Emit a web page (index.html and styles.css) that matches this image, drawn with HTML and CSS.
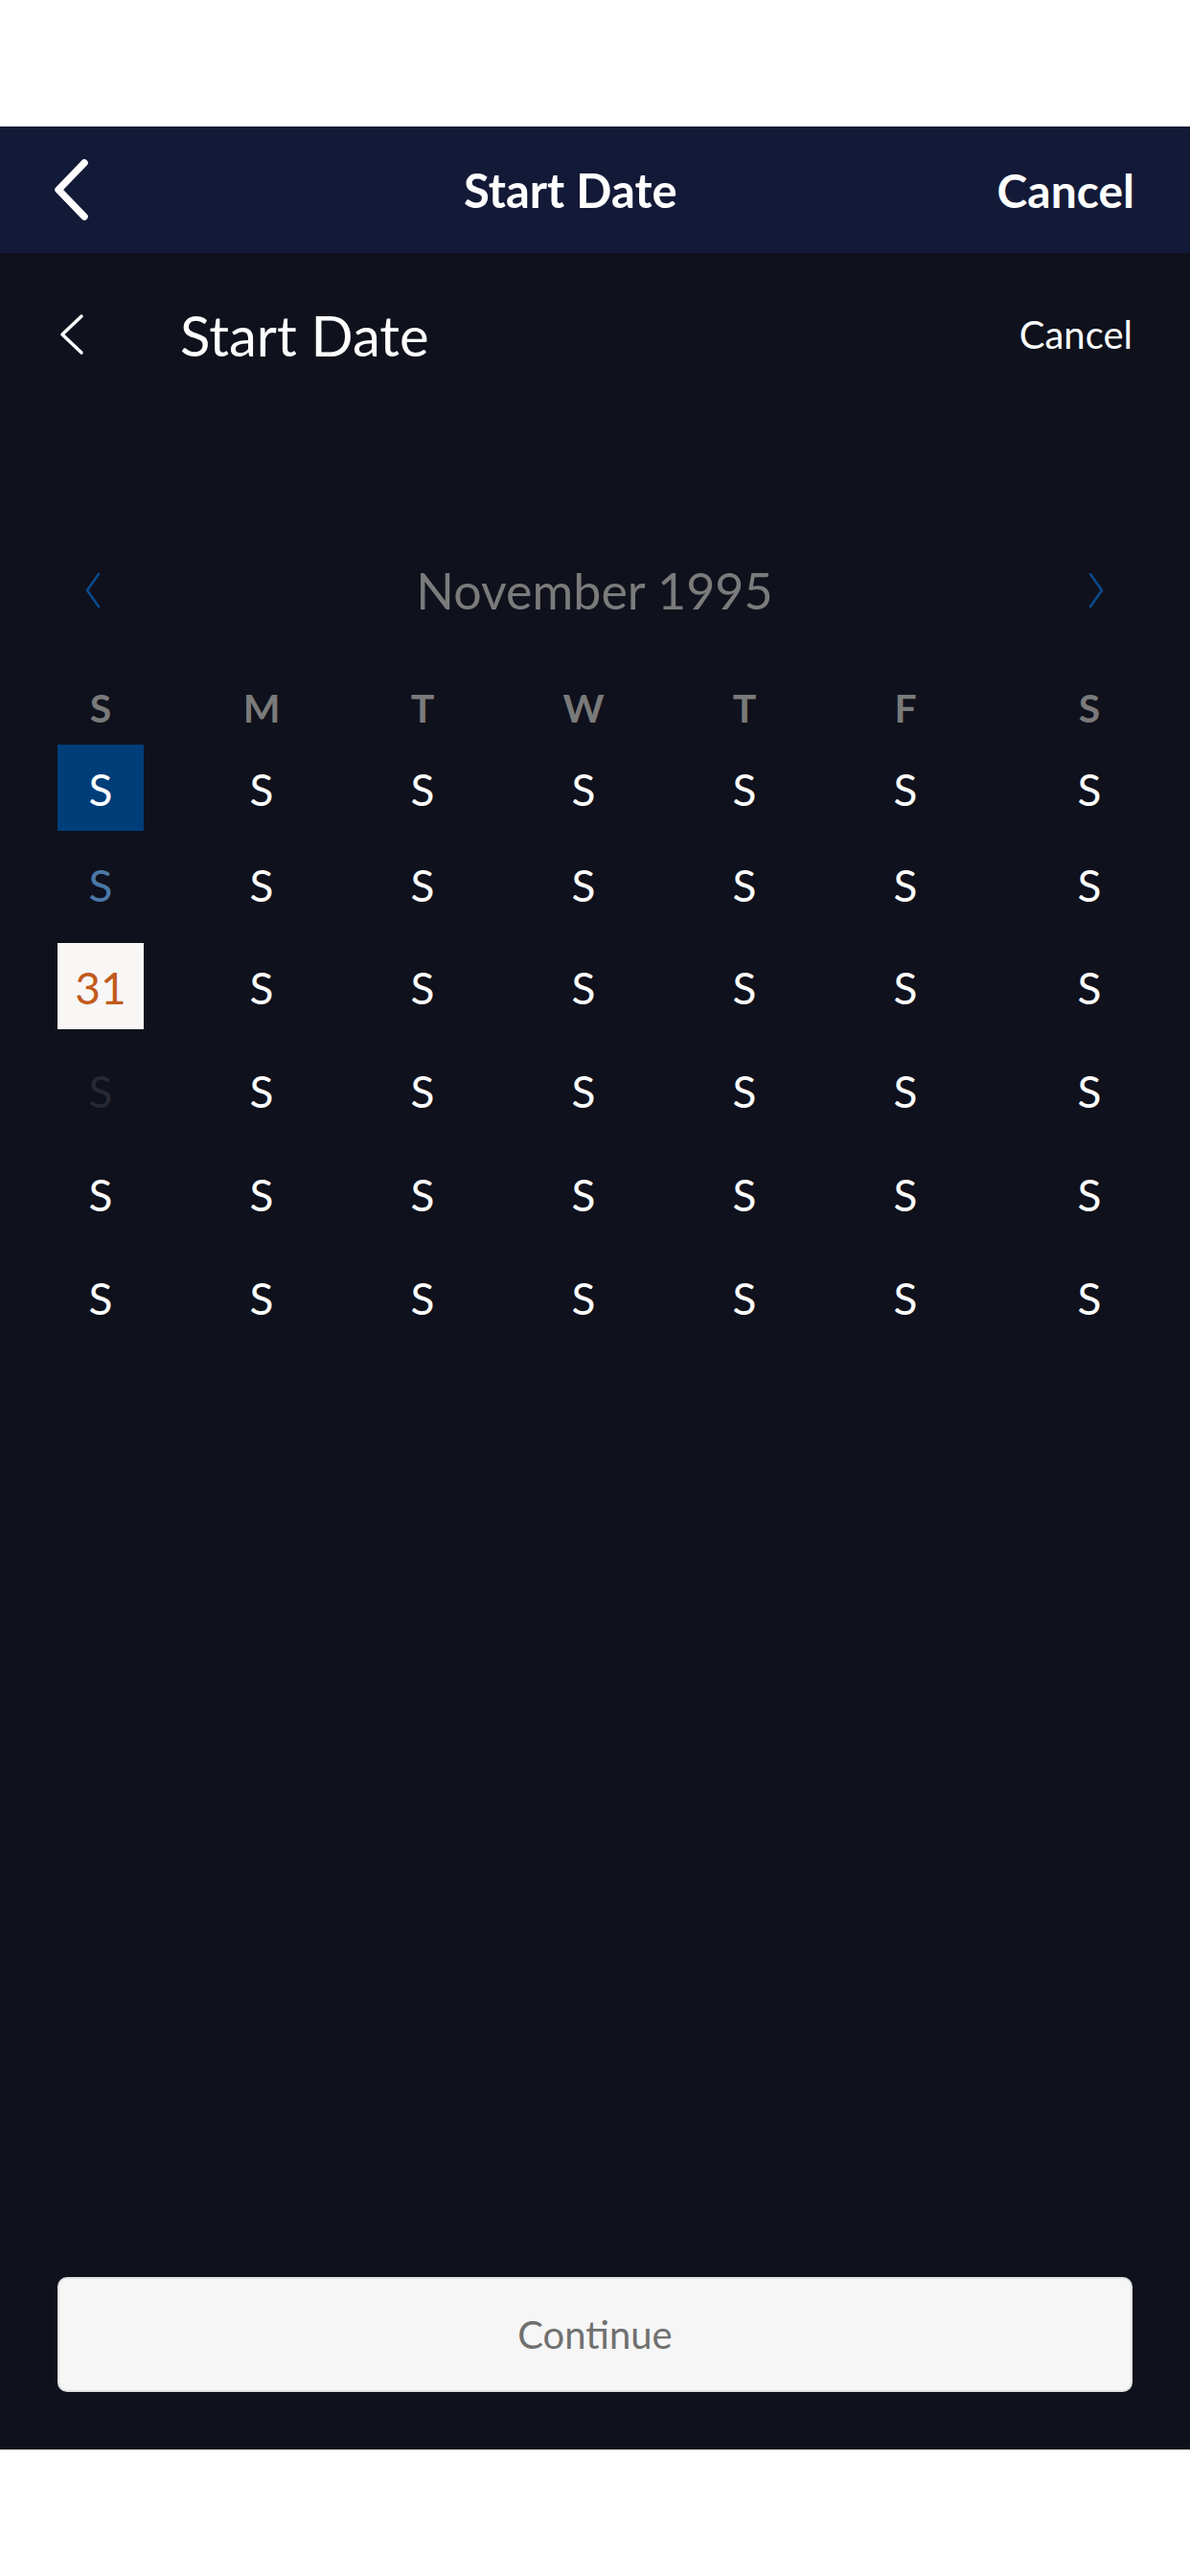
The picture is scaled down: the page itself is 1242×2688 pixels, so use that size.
FILE: index.html
```html
<!DOCTYPE html>
<html lang="en">
<head>
<meta charset="utf-8">
<title>Start Date</title>
<link rel="stylesheet" href="styles.css">
</head>
<body>
<div class="page">
  <div class="status-space"></div>
  <header class="navbar">
    <div class="nav-back">
      <svg width="42" height="66" viewBox="0 0 42 66"><path d="M34 5 L7 33 L34 61" fill="none" stroke="#ffffff" stroke-width="7.5" stroke-linecap="round" stroke-linejoin="round"/></svg>
    </div>
    <div class="nav-title">Start Date</div>
    <div class="nav-cancel">Cancel</div>
  </header>
  <main class="screen">
    <div class="subheader">
      <svg class="sub-back" width="30" height="46" viewBox="0 0 30 46"><path d="M25 4 L5 23 L25 42" fill="none" stroke="#ffffff" stroke-width="3.5" stroke-linecap="round" stroke-linejoin="round"/></svg>
      <div class="sub-title">Start Date</div>
      <div class="sub-cancel">Cancel</div>
    </div>

    <div class="month-nav">
      <svg width="22" height="40" viewBox="0 0 22 40"><path d="M17 3 L5 20 L17 37" fill="none" stroke="#0b4a8c" stroke-width="2.6" stroke-linecap="round" stroke-linejoin="round"/></svg>
      <div class="month-title">November 1995</div>
      <svg width="22" height="40" viewBox="0 0 22 40"><path d="M5 3 L17 20 L5 37" fill="none" stroke="#0b4a8c" stroke-width="2.6" stroke-linecap="round" stroke-linejoin="round"/></svg>
    </div>

    <div class="weekdays">
      <div class="wd">S</div><div class="wd">M</div><div class="wd">T</div><div class="wd">W</div><div class="wd">T</div><div class="wd">F</div><div class="wd">S</div>
    </div>

    <div class="days">
      <div class="day selected">S</div><div class="day">S</div><div class="day">S</div><div class="day">S</div><div class="day">S</div><div class="day">S</div><div class="day">S</div>
      <div class="day accent">S</div><div class="day">S</div><div class="day">S</div><div class="day">S</div><div class="day">S</div><div class="day">S</div><div class="day">S</div>
      <div class="day today">31</div><div class="day">S</div><div class="day">S</div><div class="day">S</div><div class="day">S</div><div class="day">S</div><div class="day">S</div>
      <div class="day faded">S</div><div class="day">S</div><div class="day">S</div><div class="day">S</div><div class="day">S</div><div class="day">S</div><div class="day">S</div>
      <div class="day">S</div><div class="day">S</div><div class="day">S</div><div class="day">S</div><div class="day">S</div><div class="day">S</div><div class="day">S</div>
      <div class="day">S</div><div class="day">S</div><div class="day">S</div><div class="day">S</div><div class="day">S</div><div class="day">S</div><div class="day">S</div>
    </div>

    <button class="continue" type="button">Continue</button>
  </main>
  <div class="bottom-space"></div>
</div>
</body>
</html>
```

FILE: styles.css
```css
* { box-sizing: border-box; }

html, body {
  margin: 0;
  padding: 0;
  background: #ffffff;
  font-family: Lato, "Noto Sans", "Liberation Sans", sans-serif;
}

.page {
  width: 1242px;
  display: flex;
  flex-direction: column;
}

.status-space { height: 132px; background: #ffffff; }
.bottom-space { height: 132px; background: #ffffff; }

.navbar {
  height: 132px;
  background: #131a37;
  display: flex;
  align-items: center;
  padding: 0 58px 0 54px;
  color: #ffffff;
}

.nav-back {
  width: 96px;
  display: flex;
  align-items: center;
}
.nav-back svg { display: block; }

.nav-title {
  flex: 1;
  text-align: center;
  font-size: 49px;
  font-weight: 700;
}

.nav-cancel {
  font-size: 48px;
  font-weight: 700;
}

.screen {
  height: 2292px;
  background: #0f111c;
  display: flex;
  flex-direction: column;
  padding: 0 60px 60px 60px;
}

.subheader {
  margin-top: 36px;
  height: 98px;
  display: flex;
  align-items: center;
  color: #ffffff;
}
.sub-back { display: block; flex: none; }
.sub-title {
  margin-left: 98px;
  font-size: 58px;
  font-weight: 400;
  flex: 1;
}
.sub-cancel {
  font-size: 40px;
  font-weight: 400;
}

.month-nav {
  margin-top: 188px;
  height: 60px;
  display: flex;
  align-items: center;
  padding: 0 27px 0 26px;
}
.month-nav svg { display: block; flex: none; }
.month-title {
  flex: 1;
  text-align: center;
  font-size: 52px;
  color: #7b7b7b;
  font-weight: 400;
}

.weekdays,
.days {
  display: grid;
  grid-template-columns: repeat(6, 168px) 1fr;
}

.weekdays {
  margin-top: 67px;
  height: 50px;
  align-items: center;
}

.wd {
  width: 90px;
  text-align: center;
  font-size: 41px;
  font-weight: 700;
  color: #7a7a7a;
}
.wd:last-child { justify-self: end; }

.days {
  margin-top: 14px;
  grid-template-rows: 100px 107px 108px 108px 108px 90px;
  align-items: start;
}

.day {
  width: 90px;
  height: 90px;
  display: flex;
  align-items: center;
  justify-content: center;
  font-size: 46px;
  color: #ffffff;
  padding-top: 3px;
}
.day:nth-child(7n) { justify-self: end; }

.day.selected { background: #003e7a; }
.day.accent { color: #4a78a6; }
.day.today { background: #f8f7f6; color: #c25a1c; }
.day.faded { color: #262932; }

.continue {
  margin-top: auto;
  height: 120px;
  width: 100%;
  background: #f6f6f6;
  border: 2px solid #e1e1e3;
  border-radius: 10px;
  font-family: Lato, "Noto Sans", "Liberation Sans", sans-serif;
  font-size: 40px;
  color: #707070;
  padding: 0;
}
```
